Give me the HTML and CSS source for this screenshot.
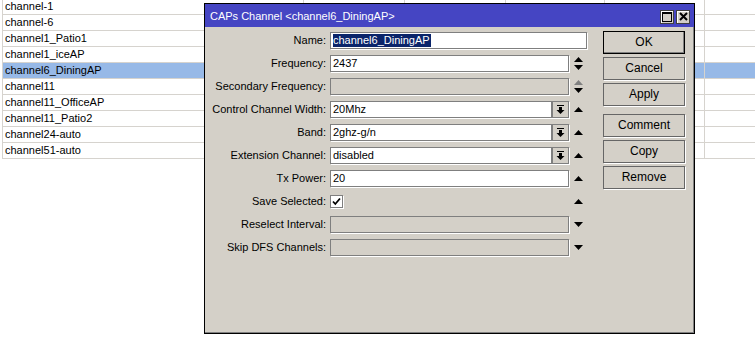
FILE: index.html
```html
<!DOCTYPE html>
<html lang="en">
  <head>
    <meta charset="UTF-8" />
    <title>CAPs Channel</title>
    <link rel="stylesheet" href="styles.css">
  </head>
  <body>
    <div class="list">
      <div class="row"><span class="cell">channel-1</span><span class="cell"></span><span class="cell"></span><span class="cell"></span><span class="cell"></span><span class="cell"></span></div>
      <div class="row"><span class="cell">channel-6</span><span class="cell"></span><span class="cell"></span><span class="cell"></span><span class="cell"></span><span class="cell"></span></div>
      <div class="row"><span class="cell">channel1_Patio1</span><span class="cell"></span><span class="cell"></span><span class="cell"></span><span class="cell"></span><span class="cell"></span></div>
      <div class="row"><span class="cell">channel1_iceAP</span><span class="cell"></span><span class="cell"></span><span class="cell"></span><span class="cell"></span><span class="cell"></span></div>
      <div class="row selected"><span class="cell">channel6_DiningAP</span><span class="cell"></span><span class="cell"></span><span class="cell"></span><span class="cell"></span><span class="cell"></span></div>
      <div class="row"><span class="cell">channel11</span><span class="cell"></span><span class="cell"></span><span class="cell"></span><span class="cell"></span><span class="cell"></span></div>
      <div class="row"><span class="cell">channel11_OfficeAP</span><span class="cell"></span><span class="cell"></span><span class="cell"></span><span class="cell"></span><span class="cell"></span></div>
      <div class="row"><span class="cell">channel11_Patio2</span><span class="cell"></span><span class="cell"></span><span class="cell"></span><span class="cell"></span><span class="cell"></span></div>
      <div class="row"><span class="cell">channel24-auto</span><span class="cell"></span><span class="cell"></span><span class="cell"></span><span class="cell"></span><span class="cell"></span></div>
      <div class="row"><span class="cell">channel51-auto</span><span class="cell"></span><span class="cell"></span><span class="cell"></span><span class="cell"></span><span class="cell"></span></div>
    </div>

    <div class="dialog">
      <div class="titlebar">
        <span class="title">CAPs Channel &lt;channel6_DiningAP&gt;</span>
        <div class="title-buttons">
          <span class="tbtn">
            <svg width="10" height="10" viewBox="0 0 10 10"><rect x="0.5" y="0.5" width="9" height="9" fill="none" stroke="#000"/><rect x="0" y="0" width="10" height="2" fill="#000"/></svg>
          </span>
          <span class="tbtn">
            <svg width="9" height="9" viewBox="0 0 9 9"><path d="M1 1 L8 8 M8 1 L1 8" stroke="#000" stroke-width="2"/></svg>
          </span>
        </div>
      </div>

      <div class="body">
        <div class="form">
          <label>Name:</label>
          <div class="field">
            <div class="input wide"><span class="sel">channel6_DiningAP</span></div>
          </div>

          <label>Frequency:</label>
          <div class="field">
            <div class="input">2437</div>
            <span class="arrow">
              <svg width="9" height="13" viewBox="0 0 9 13"><polygon points="4.5,0 9,5 0,5" fill="#000"/><polygon points="0,8 9,8 4.5,13" fill="#000"/></svg>
            </span>
          </div>

          <label>Secondary Frequency:</label>
          <div class="field">
            <div class="input disabled"></div>
            <span class="arrow">
              <svg width="9" height="13" viewBox="0 0 9 13"><polygon points="4.5,0 9,5 0,5" fill="#808080"/><polygon points="0,8 9,8 4.5,13" fill="#000"/></svg>
            </span>
          </div>

          <label>Control Channel Width:</label>
          <div class="field">
            <div class="input short">20Mhz</div>
            <span class="dropbtn">
              <svg width="9" height="9" viewBox="0 0 9 9"><rect x="1" y="0" width="7" height="1" fill="#000"/><rect x="3" y="2" width="3" height="3" fill="#000"/><polygon points="0.5,5 8.5,5 4.5,9" fill="#000"/></svg>
            </span>
            <span class="arrow">
              <svg width="9" height="5" viewBox="0 0 9 5"><polygon points="4.5,0 9,5 0,5" fill="#000"/></svg>
            </span>
          </div>

          <label>Band:</label>
          <div class="field">
            <div class="input short">2ghz-g/n</div>
            <span class="dropbtn">
              <svg width="9" height="9" viewBox="0 0 9 9"><rect x="1" y="0" width="7" height="1" fill="#000"/><rect x="3" y="2" width="3" height="3" fill="#000"/><polygon points="0.5,5 8.5,5 4.5,9" fill="#000"/></svg>
            </span>
            <span class="arrow">
              <svg width="9" height="5" viewBox="0 0 9 5"><polygon points="4.5,0 9,5 0,5" fill="#000"/></svg>
            </span>
          </div>

          <label>Extension Channel:</label>
          <div class="field">
            <div class="input short">disabled</div>
            <span class="dropbtn">
              <svg width="9" height="9" viewBox="0 0 9 9"><rect x="1" y="0" width="7" height="1" fill="#000"/><rect x="3" y="2" width="3" height="3" fill="#000"/><polygon points="0.5,5 8.5,5 4.5,9" fill="#000"/></svg>
            </span>
            <span class="arrow">
              <svg width="9" height="5" viewBox="0 0 9 5"><polygon points="4.5,0 9,5 0,5" fill="#000"/></svg>
            </span>
          </div>

          <label>Tx Power:</label>
          <div class="field">
            <div class="input">20</div>
            <span class="arrow">
              <svg width="9" height="5" viewBox="0 0 9 5"><polygon points="4.5,0 9,5 0,5" fill="#000"/></svg>
            </span>
          </div>

          <label>Save Selected:</label>
          <div class="field">
            <span class="checkbox">
              <svg width="11" height="11" viewBox="0 0 11 11"><path d="M2 5.5 L4.3 8 L9 2.5" fill="none" stroke="#000" stroke-width="1.8"/></svg>
            </span>
            <span class="spacer"></span>
            <span class="arrow">
              <svg width="9" height="5" viewBox="0 0 9 5"><polygon points="4.5,0 9,5 0,5" fill="#000"/></svg>
            </span>
          </div>

          <label>Reselect Interval:</label>
          <div class="field">
            <div class="input disabled"></div>
            <span class="arrow">
              <svg width="9" height="5" viewBox="0 0 9 5"><polygon points="0,0 9,0 4.5,5" fill="#000"/></svg>
            </span>
          </div>

          <label>Skip DFS Channels:</label>
          <div class="field">
            <div class="input disabled"></div>
            <span class="arrow">
              <svg width="9" height="5" viewBox="0 0 9 5"><polygon points="0,0 9,0 4.5,5" fill="#000"/></svg>
            </span>
          </div>
        </div>

        <div class="buttons">
          <div class="btn default">OK</div>
          <div class="btn">Cancel</div>
          <div class="btn">Apply</div>
          <div class="btn group">Comment</div>
          <div class="btn">Copy</div>
          <div class="btn">Remove</div>
        </div>
      </div>
    </div>
  </body>
</html>
```

FILE: styles.css
```css
* {
  margin: 0;
  padding: 0;
  box-sizing: border-box;
}

body {
  background: #ffffff;
  font-family: "Liberation Sans", Arial, sans-serif;
  font-size: 11px;
  color: #000;
  width: 755px;
  height: 343px;
  overflow: hidden;
  position: relative;
}

/* background list */
.list {
  margin: -1px 0 0 2px;
  border-left: 1px solid #d6d3ce;
}

.row {
  display: grid;
  grid-template-columns: 301px 101px 101px 99px 100px 1fr;
  height: 16px;
  border-bottom: 1px solid #d6d3ce;
}

.cell {
  border-right: 1px solid #d6d3ce;
  padding-left: 2px;
  line-height: 15px;
  white-space: nowrap;
}

.cell:last-child {
  border-right: none;
}

.row.selected {
  background: #97b9e7;
}

/* dialog window */
.dialog {
  position: absolute;
  left: 204px;
  top: 3px;
  width: 491px;
  height: 331px;
  background: #d4d0c8;
  border: 1px solid #000;
  box-shadow: inset -1px -1px 0 #808080;
}

.titlebar {
  height: 23px;
  background: #4545c3;
  display: flex;
  align-items: center;
  justify-content: space-between;
  padding: 0 4px 0 5px;
}

.title {
  color: #fff;
  font-size: 11px;
}

.title-buttons {
  display: flex;
  gap: 2px;
  margin-top: 2px;
}

.tbtn {
  width: 14px;
  height: 14px;
  background: #d4d0c8;
  border: 1px solid #404040;
  box-shadow: inset 1px 1px 0 #fff;
  display: flex;
  align-items: center;
  justify-content: center;
}

.body {
  display: flex;
  padding: 4px 8px 0 0;
}

.form {
  display: grid;
  grid-template-columns: 121px 257px;
  grid-auto-rows: 17px;
  column-gap: 4px;
  row-gap: 6px;
  padding-top: 1px;
}

.form label {
  text-align: right;
  line-height: 17px;
  white-space: nowrap;
}

.field {
  display: flex;
  align-items: center;
}

.input {
  width: 239px;
  height: 17px;
  background: #fff;
  border: 1px solid #7f7f7f;
  box-shadow: 1px 1px 0 #fff;
  padding-left: 2px;
  line-height: 15px;
  white-space: nowrap;
}

.input.wide {
  width: 257px;
}

.input.short {
  width: 222px;
}

.input.disabled {
  background: #d4d0c8;
}

.sel {
  background: #0a246a;
  color: #fff;
  padding: 0 1px 1px 0;
}

.dropbtn {
  width: 17px;
  height: 17px;
  border: 1px solid #7f7f7f;
  box-shadow: 1px 1px 0 #fff;
  display: flex;
  align-items: center;
  justify-content: center;
}

.arrow {
  width: 18px;
  display: flex;
  justify-content: center;
  padding-left: 1px;
}

.checkbox {
  width: 13px;
  height: 13px;
  background: #fff;
  border: 1px solid #7f7f7f;
  box-shadow: 1px 1px 0 #fff;
  display: flex;
  align-items: center;
  justify-content: center;
}

.spacer {
  width: 226px;
}

.buttons {
  margin-left: 16px;
  width: 82px;
  display: flex;
  flex-direction: column;
  gap: 3px;
}

.btn {
  height: 23px;
  border: 1px solid #666;
  box-shadow: 1px 1px 0 #fff;
  text-align: center;
  line-height: 21px;
  font-size: 12px;
}

.btn.default {
  border-color: #000;
  box-shadow: inset -1px -1px 0 #808080;
}

.btn.group {
  margin-top: 5px;
}
```
